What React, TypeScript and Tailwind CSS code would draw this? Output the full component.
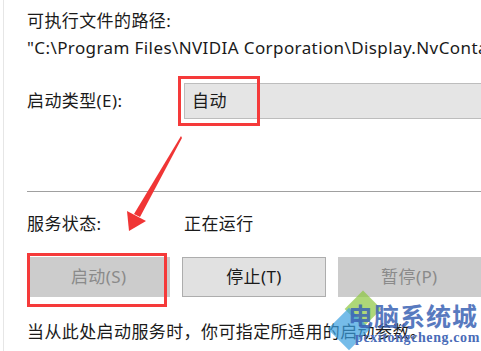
import React from 'react';

const font = { fontFamily: '"Noto Sans", "Noto Sans CJK SC", sans-serif' };

const Arrow: React.FC = () => (
    <svg className="absolute left-0 top-0 pointer-events-none" width="481" height="351" viewBox="0 0 481 351">
        {/* shaft tapers from a point near the combo box down to the head */}
        <polygon points="181,136 182,138 140,217 134,214" fill="#f03535" />
        <polygon points="129,231 127,211 146,221" fill="#f03535" />
    </svg>
);

const Watermark: React.FC = () => (
    <div className="absolute left-[330px] top-[294px] w-[151px] h-[57px] pointer-events-none tracking-normal">
        <div className="absolute left-[20px] top-[2px] w-[26px] h-[26px] rotate-45 bg-[#8cc63f] opacity-70" />
        <div className="absolute left-[4px] top-[20px] w-[30px] h-[30px] rotate-45 bg-[#3aa0e0] opacity-70" />
        <div
            className="absolute left-[18px] top-[6px] text-[25px] leading-[30px] font-bold tracking-[1px] text-[#3b63b5] opacity-85"
            style={{ fontFamily: '"Noto Sans CJK SC", sans-serif' }}
        >
            电脑系统城
        </div>
        <div
            className="absolute left-[25px] top-[37px] text-[14px] leading-[14px] font-bold tracking-[0.6px] text-[#4a6cb8] whitespace-nowrap"
            style={{ fontFamily: '"Liberation Serif", serif' }}
        >
            pcxitongcheng.com
        </div>
    </div>
);

export default function App() {
    return (
        <div
            className="relative w-[481px] h-[351px] overflow-hidden bg-white text-[17px] tracking-[0.4px] text-[#1a1a1a]"
            style={font}
        >
            <div className="absolute left-[3px] top-0 bottom-0 w-px bg-[#e6e6e6]" />

            <div className="pl-[27px] pt-[10px] flex flex-col">
                <div className="leading-[22px]">可执行文件的路径:</div>
                <div className="mt-[5px] leading-[22px] whitespace-nowrap">
                    "C:\Program Files\NVIDIA Corporation\Display.NvContainer\NVDisplay.Container.exe"
                </div>

                <div className="mt-[24px] flex items-center h-[36px]">
                    <div className="w-[157px] leading-[22px]">启动类型(E):</div>
                    <div className="flex-1 h-[36px] flex items-center pl-[7px] bg-[#e5e5e5] border border-r-0 border-[#bdbdbd] leading-[22px]">
                        自动
                    </div>
                </div>

                <div className="mt-[72px] h-px bg-[#a0a0a0]" />

                <div className="mt-[21px] flex leading-[22px]">
                    <div className="w-[157px]">服务状态:</div>
                    <div>正在运行</div>
                </div>

                <div className="mt-[22px] flex gap-[12px] h-[40px]">
                    <div className="w-[146px] flex items-center justify-center bg-[#cccccc] text-[#8a8a8a]">启动(S)</div>
                    <div className="w-[146px] flex items-center justify-center bg-[#e1e1e1] border border-[#adadad]">停止(T)</div>
                    <div className="w-[146px] flex items-center justify-center bg-[#cccccc] text-[#8a8a8a]">暂停(P)</div>
                </div>

                <div className="mt-[24px] leading-[22px] whitespace-nowrap">当从此处启动服务时，你可指定所适用的启动参数。</div>
            </div>

            {/* red highlight boxes */}
            <div className="absolute left-[178px] top-[76px] w-[82px] h-[50px] border-[3px] border-[#f53a3a]" />
            <div className="absolute left-[27px] top-[253px] w-[140px] h-[54px] border-[3px] border-[#f53a3a]" />

            <Arrow />
            <Watermark />
        </div>
    );
}
